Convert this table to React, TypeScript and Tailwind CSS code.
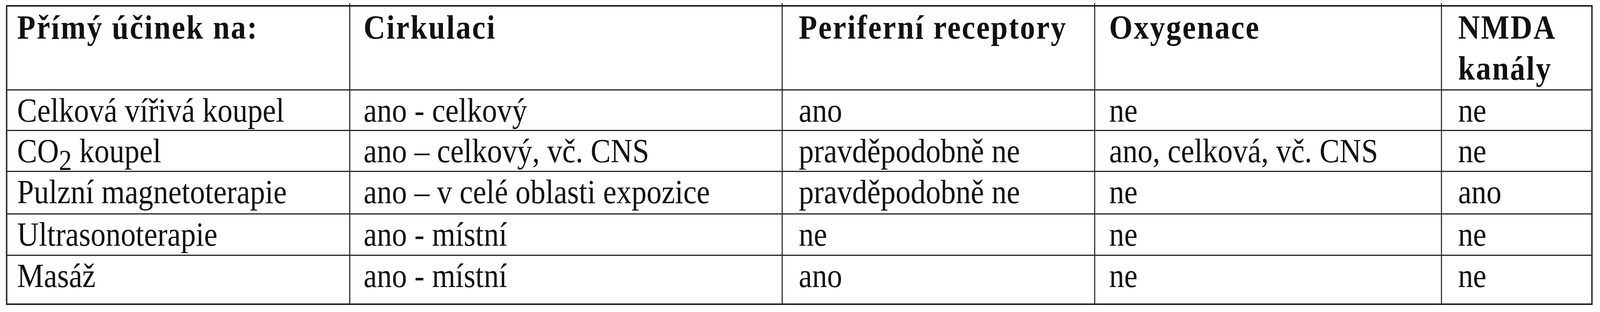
import React from "react"

// ── Table data ───────────────────────────────────────────────────────────────

const header = ["Přímý účinek na:", "Cirkulaci", "Periferní receptory", "Oxygenace", "NMDA kanály"]

const rows: Array<Array<React.ReactNode>> = [
  ["Celková vířivá koupel", "ano - celkový", "ano", "ne", "ne"],
  [
    <>
      CO<sub className="text-[74px] -bottom-[20px]">2</sub> koupel
    </>,
    "ano – celkový, vč. CNS",
    "pravděpodobně ne",
    "ano, celková, vč. CNS",
    "ne",
  ],
  ["Pulzní magnetoterapie", "ano – v celé oblasti expozice", "pravděpodobně ne", "ne", "ano"],
  ["Ultrasonoterapie", "ano - místní", "ne", "ne", "ne"],
  ["Masáž", "ano - místní", "ano", "ne", "ne"],
]

// left padding per column, so text sits where the scan has it
const pad = ["pl-[28px]", "pl-[38px]", "pl-[46px]", "pl-[40px]", "pl-[46px]"]

// ── Main component ───────────────────────────────────────────────────────────

export default function App() {
  return (
    <div className="w-full h-[800px] overflow-hidden bg-white">
      <div className="w-[4577px] origin-top-left scale-x-[0.8949] font-['Liberation_Serif',serif] text-[#111]">
        <div className="ml-[17px] pt-[8px] w-max">
          {/* little overshoot of the column rules above the top border */}
          <div className="flex h-[5px]">
            <div className="w-[982px]" />
            <div className="w-[3px] bg-[#333]" />
            <div className="w-[1234px]" />
            <div className="w-[3px] bg-[#333]" />
            <div className="w-[891px]" />
            <div className="w-[3px] bg-[#333]" />
            <div className="w-[989px]" />
            <div className="w-[3px] bg-[#333]" />
          </div>

          <div className="grid grid-cols-[978px_1234px_891px_989px_427px] grid-rows-[212px_101px_102px_106px_103px_122px] gap-[3px] bg-[#222] p-[4px]">
            {header.map((h, i) => (
              <div
                key={`h${i}`}
                className={`bg-white pt-[1px] text-[86px] font-bold leading-[105px] tracking-[3.4px] ${pad[i]}`}
              >
                {h}
              </div>
            ))}
            {rows.map((row, r) =>
              row.map((cell, c) => (
                <div key={`${r}-${c}`} className={`bg-white text-[86px] leading-[102px] whitespace-nowrap ${pad[c]}`}>
                  {cell}
                </div>
              ))
            )}
          </div>
        </div>
      </div>
    </div>
  )
}
